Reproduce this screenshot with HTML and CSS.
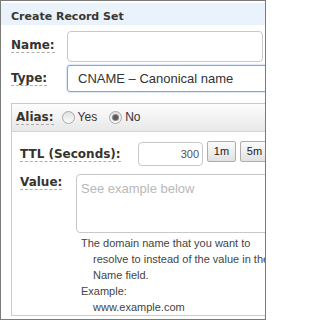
FILE: index.html
```html
<!DOCTYPE html>
<html>
<head>
<meta charset="utf-8">
<link rel="stylesheet" href="styles.css">
</head>
<body>
<div class="frame">
  <div class="panel">
    <div class="title">Create Record Set</div>
    <div class="form">
      <div class="row row-name">
        <div class="label"><span class="lbl">Name:</span></div>
        <div class="text-input"></div>
      </div>
      <div class="row row-type">
        <div class="label label-type"><span class="lbl">Type:</span></div>
        <div class="select">CNAME – Canonical name</div>
      </div>
      <div class="box">
        <div class="box-head">
          <span class="lbl">Alias:</span>
          <span class="radio radio-first"></span><span class="radio-text">Yes</span>
          <span class="radio radio-second checked"></span><span class="radio-text">No</span>
        </div>
        <div class="box-body">
          <div class="row row-ttl">
            <div class="label label-ttl"><span class="lbl">TTL (Seconds):</span></div>
            <div class="ttl-input">300</div>
            <div class="btn">1m</div>
            <div class="btn">5m</div>
          </div>
          <div class="row row-value">
            <div class="label label-value"><span class="lbl">Value:</span></div>
            <div class="textarea">See example below</div>
          </div>
          <p class="help help-first">The domain name that you want to resolve to instead of the value in the Name field.</p>
          <p class="help">Example:<br>www.example.com</p>
        </div>
      </div>
    </div>
  </div>
</div>
</body>
</html>
```
FILE: styles.css
```css
body {
  margin: 0;
  background: #fff;
}
.frame {
  width: 266px;
  height: 320px;
  box-sizing: border-box;
  border: 1px solid #7b7b7b;
  overflow: hidden;
  background: #fff;
}
.panel {
  width: 300px;
}
.title {
  margin-top: 2px;
  background: #eaf2fc;
  padding: 7px 0 2px 10px;
  font: bold 11px/13px "DejaVu Sans", sans-serif;
  color: #3a3630;
}
.form {
  padding: 6px 0 0 10px;
}
.row {
  display: flex;
  align-items: flex-start;
}
.label {
  width: 56px;
  flex: none;
  padding-top: 7px;
  font: bold 12px/14px "DejaVu Sans", sans-serif;
  color: #333;
}
.lbl {
  display: inline-block;
  vertical-align: top;
  font: bold 12px/14px "DejaVu Sans", sans-serif;
  color: #36332e;
  border-bottom: 1px dashed #ababab;
}
.text-input {
  width: 196px;
  height: 31px;
  box-sizing: border-box;
  border: 1px solid #c8c8c8;
  border-radius: 4px;
}
.row-type {
  margin-top: 3px;
}
.label-type {
  padding-top: 6px;
}
.select {
  width: 230px;
  height: 27px;
  box-sizing: border-box;
  border: 1px solid #7fa5e3;
  border-radius: 3px;
  box-shadow: 0 0 2px rgba(90, 140, 225, 0.7);
  padding-left: 10px;
  font: 13px/25px "Liberation Sans", Arial, sans-serif;
  color: #333;
  white-space: nowrap;
}
.box {
  margin-top: 11px;
  width: 300px;
  border: 1px solid #cacaca;
}
.box-head {
  height: 28px;
  box-sizing: border-box;
  display: flex;
  align-items: center;
  padding-left: 4px;
  padding-bottom: 1px;
  background: linear-gradient(#fdfdfd, #e8e8e8);
  border-bottom: 1px solid #d4d4d4;
}
.radio {
  width: 13px;
  height: 13px;
  box-sizing: border-box;
  border-radius: 50%;
  border: 1px solid #a8a8a8;
  background: linear-gradient(#e2e2e2, #fbfbfb);
  display: flex;
  align-items: center;
  justify-content: center;
}
.radio-first {
  margin-left: 8px;
}
.radio-second {
  margin-left: 12px;
}
.checked::after {
  content: "";
  width: 5px;
  height: 5px;
  border-radius: 50%;
  background: #5a5a5a;
  box-shadow: 0 0 0 1px #8a8a8a;
}
.radio-text {
  margin-left: 3px;
  font: 12px/14px "Liberation Sans", Arial, sans-serif;
  color: #333;
}
.box-body {
  padding: 10px 0 0 8px;
}
.label-ttl {
  width: 118px;
  padding-top: 5px;
}
.ttl-input {
  width: 65px;
  height: 24px;
  box-sizing: border-box;
  border: 1px solid #c8c8c8;
  border-radius: 4px;
  padding-right: 3px;
  text-align: right;
  font: 11px/22px "Liberation Sans", Arial, sans-serif;
  color: #555;
}
.btn {
  margin-left: 4px;
  margin-top: -1px;
  width: 29px;
  height: 21px;
  box-sizing: border-box;
  border: 1px solid #adadad;
  border-radius: 2px;
  background: linear-gradient(#fbfbfb, #e1e1e1);
  text-align: center;
  font: 11px/19px "Liberation Sans", Arial, sans-serif;
  color: #222;
}
.row-value {
  margin-top: 8px;
}
.label-value {
  padding-top: 1px;
}
.textarea {
  width: 210px;
  height: 59px;
  box-sizing: border-box;
  border: 1px solid #c8c8c8;
  border-radius: 4px;
  padding: 6px 4px;
  font: 13px/15px "Liberation Sans", Arial, sans-serif;
  color: #b8b8b8;
  white-space: nowrap;
}
.help {
  margin: 0 0 0 61px;
  width: 183px;
  padding-left: 12px;
  text-indent: -12px;
  font: 11px/16px "Liberation Sans", Arial, sans-serif;
  color: #444;
}
.help-first {
  margin-top: 2px;
}
```
